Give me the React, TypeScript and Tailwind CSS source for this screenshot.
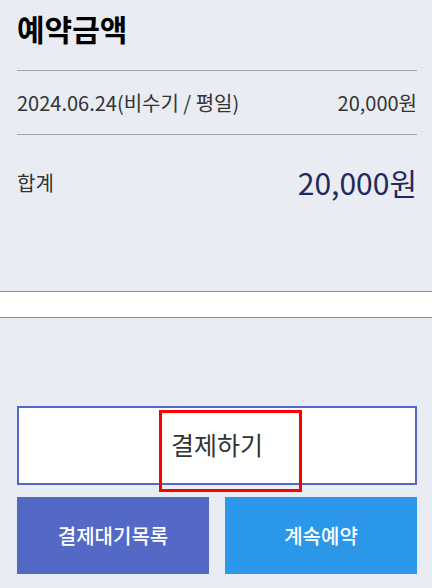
import React from "react";

export default function App() {
  const font = { fontFamily: '"Noto Sans CJK KR", "Noto Sans", sans-serif' };
  return (
    <div className="w-[432px] h-[588px] bg-[#e9ecf2] overflow-hidden" style={font}>
      <div className="pl-[17px] pr-[15px]">
        <div className="h-[70px] pt-[7px]">
          <h1 className="text-[30px] leading-[42px] font-bold text-black">예약금액</h1>
        </div>
        <div className="border-t border-[#a3a5ab] h-[64px] flex items-center justify-between text-[20px] text-[#333]">
          <span>2024.06.24(비수기 / 평일)</span>
          <span>20,000원</span>
        </div>
        <div className="border-t border-[#a3a5ab] h-[94px] flex items-center justify-between pt-[2px]">
          <span className="text-[20px] text-[#333]">합계</span>
          <span className="text-[30px] text-[#1f2b5e]">20,000원</span>
        </div>
      </div>
      <div className="h-[63px]" />
      <div className="h-[27px] bg-white border-y border-[#8b8c92]" />
      <div className="h-[88px]" />
      <div className="pl-[17px] pr-[15px]">
        <div className="relative">
          <button className="w-full h-[79px] bg-white border-2 border-[#5468c9] text-[25px] text-[#333] flex items-center justify-center pb-[1px]">
            결제하기
          </button>
          <div className="absolute left-[142px] top-[4px] w-[143px] h-[82px] border-[3px] border-[#ff0000] pointer-events-none" />
        </div>
        <div className="mt-[12px] grid grid-cols-2 gap-[16px]">
          <button className="h-[77px] bg-[#5468c6] text-white text-[20px] font-medium">결제대기목록</button>
          <button className="h-[77px] bg-[#2a97e8] text-white text-[20px] font-medium">계속예약</button>
        </div>
      </div>
    </div>
  );
}
